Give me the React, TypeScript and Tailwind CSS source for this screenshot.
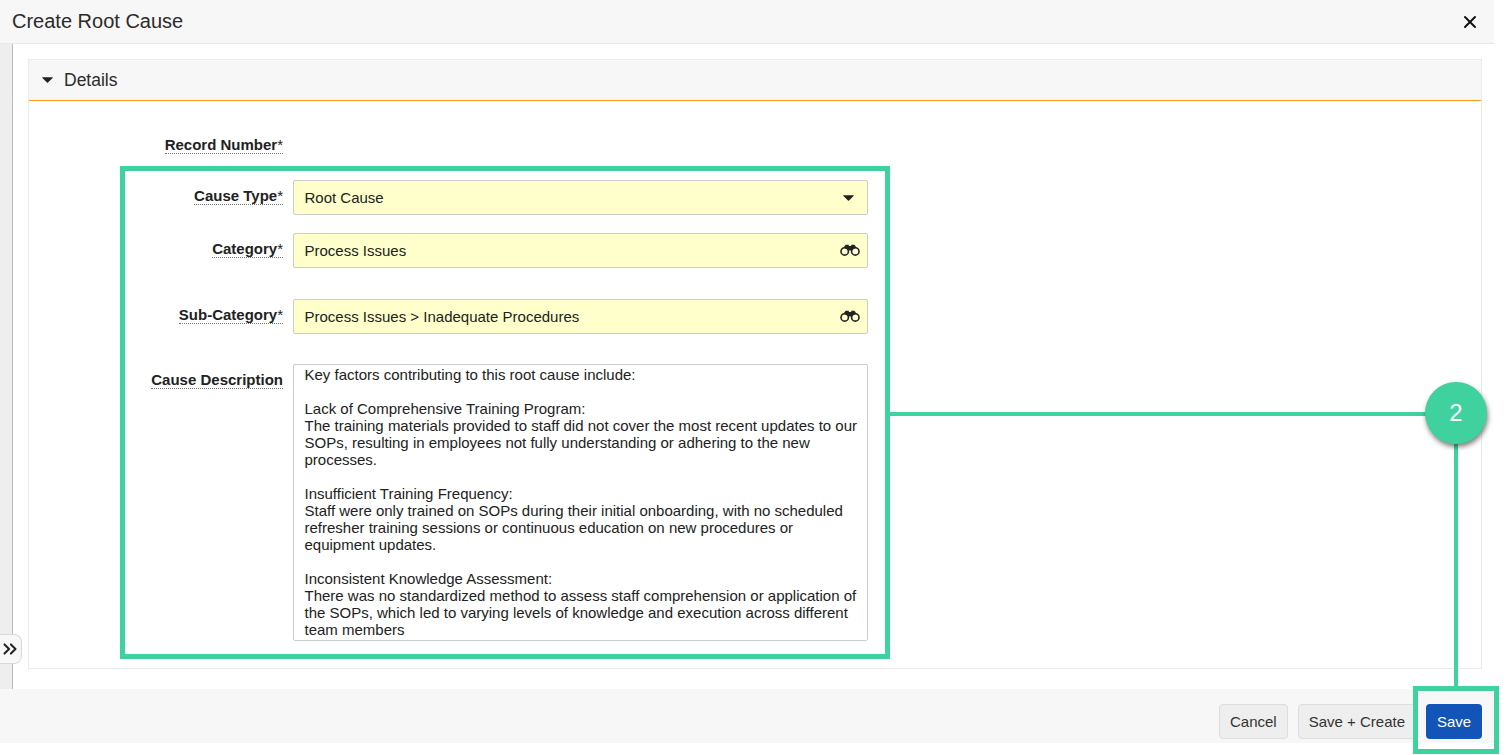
import React from 'react';
import { ChevronsRight, X } from 'lucide-react';

const font = 'font-["Liberation_Sans",Arial,sans-serif]';

function Caret({ className }: { className: string }) {
  return (
    <svg viewBox="0 0 11 6" className={className} fill="currentColor">
      <path d="M0.3 0.2 H10.7 Q11 0.6 10.6 1 L6 5.6 Q5.5 6 5 5.6 L0.4 1 Q0 0.6 0.3 0.2 Z" />
    </svg>
  );
}

function Binoculars() {
  return (
    <svg viewBox="0 0 20 12" className="-mt-[2px] -mr-[1px] h-3 w-5 text-[#222]" fill="none" stroke="currentColor">
      <circle cx="4.7" cy="7.4" r="3.7" strokeWidth="1.6" />
      <circle cx="15.3" cy="7.4" r="3.7" strokeWidth="1.6" />
      <path d="M3.6 3.6 L5.6 0.8 H8.8 V2 H11.2 V0.8 H14.4 L16.4 3.6 L11 6.4 H9 Z" fill="currentColor" stroke="none" />
    </svg>
  );
}

function Label({ text, star, className }: { text: string; star?: boolean; className?: string }) {
  return (
    <div className={`flex w-[283px] shrink-0 items-start justify-end ${className ?? ''}`}>
      <span className="border-b border-dotted border-[#777] text-[15px] leading-[17px] font-bold text-[#222]">
        {text}
        {star && <span className="font-normal">*</span>}
      </span>
    </div>
  );
}

function YellowField({ value, icon }: { value: string; icon: React.ReactNode }) {
  return (
    <div className="flex h-[35px] w-[575px] items-center justify-between rounded-[2px] border border-[#cccccc] bg-[#ffffcc] pr-2 pl-[10.5px] text-[15px] text-[#222]">
      <span className="pt-[2px]">{value}</span>
      {icon}
    </div>
  );
}

const description = `Key factors contributing to this root cause include:

Lack of Comprehensive Training Program:
The training materials provided to staff did not cover the most recent updates to our SOPs, resulting in employees not fully understanding or adhering to the new processes.

Insufficient Training Frequency:
Staff were only trained on SOPs during their initial onboarding, with no scheduled refresher training sessions or continuous education on new procedures or equipment updates.

Inconsistent Knowledge Assessment:
There was no standardized method to assess staff comprehension or application of the SOPs, which led to varying levels of knowledge and execution across different team members`;

export default function App() {
  return (
    <div className={`relative flex h-[755px] w-[1509px] flex-col overflow-hidden bg-white ${font}`}>
      <header className="flex h-11 w-[1494px] shrink-0 items-center justify-between border-b border-[#e8e8e8] bg-[#f7f7f7] pr-[14px] pl-3">
        <h1 className="-mt-[2px] text-[20px] text-[#2b2b2b]">Create Root Cause</h1>
        <X size={20} strokeWidth={2.4} className="text-[#111]" />
      </header>

      <div className="flex h-[645px] w-[1494px] shrink-0">
        <div className="w-[13px] shrink-0 border-r border-[#bbbbbb] bg-[#eeeeee]" />
        <main className="flex-1 pt-[15px] pr-3 pl-[15px]">
          <section className="h-[610px] border border-[#ebebeb]">
            <div className="flex h-[41px] items-center gap-[11px] border-b border-[#fb9a1e] bg-[#f7f7f7] pl-[13px]">
              <Caret className="h-[6px] w-[11px] text-[#222]" />
              <span className="text-[17.5px] text-[#2b2b2b]">Details</span>
            </div>

            <div className="relative pt-[35px]">
              <div className="flex -ml-[29px]">
                <Label text="Record Number" star />
              </div>
              <div className="-ml-[29px] mt-[26px] flex gap-[10px]">
                <Label text="Cause Type" star className="pt-[7px]" />
                <YellowField value="Root Cause" icon={<Caret className="mr-[5px] h-[6px] w-[11px] text-[#222]" />} />
              </div>
              <div className="-ml-[29px] mt-[18px] flex gap-[10px]">
                <Label text="Category" star className="pt-[7px]" />
                <YellowField value="Process Issues" icon={<Binoculars />} />
              </div>
              <div className="-ml-[29px] mt-[31px] flex gap-[10px]">
                <Label text="Sub-Category" star className="pt-[7px]" />
                <YellowField value="Process Issues > Inadequate Procedures" icon={<Binoculars />} />
              </div>
              <div className="-ml-[29px] mt-[30px] flex gap-[10px]">
                <Label text="Cause Description" className="pt-[7px]" />
                <div className="h-[277px] w-[575px] overflow-hidden rounded-[2px] border border-[#cccccc] bg-white pt-[1px] pr-2 pl-[10.5px] text-[15px] leading-[17px] whitespace-pre-line text-[#222]">
                  {description}
                </div>
              </div>
            </div>
          </section>
        </main>
      </div>

      <footer className="flex h-[54px] w-[1494px] shrink-0 items-start justify-end gap-[10px] bg-[#f7f7f7] pt-[15px] pr-3 text-[15px]">
        <button className="h-[35px] rounded border border-[#dddddd] bg-[#eeeeee] px-[10px] pt-[2px] text-[#333]">Cancel</button>
        <button className="h-[35px] rounded border border-[#dddddd] bg-[#eeeeee] px-[10px] pt-[2px] text-[#333]">Save + Create</button>
        <button className="h-[35px] w-[56px] rounded bg-[#1254b8] pt-[2px] text-white">Save</button>
      </footer>

      {/* sidebar toggle */}
      <button className="absolute top-[634px] left-0 flex h-[30px] w-[22px] items-center justify-start rounded-r-lg border border-l-0 border-[#d8d8d8] bg-[#f7f7f7]">
        <ChevronsRight size={22} strokeWidth={2.2} className="-ml-[1px] shrink-0 text-[#222]" />
      </button>

      {/* tutorial annotation overlay */}
      <div className="absolute top-[166px] left-[120px] h-[493px] w-[770px] border-[5px] border-[#3fd29f]" />
      <div className="absolute top-[412px] left-[890px] h-1 w-[536px] bg-[#3fd29f]" />
      <div className="absolute top-[444px] left-[1454px] h-[243px] w-1 bg-[#3fd29f]" />
      <div className="absolute top-[382px] left-[1425px] flex h-[62px] w-[62px] items-center justify-center rounded-full bg-[#3fd29f] text-[24px] text-white shadow-[1px_3px_5px_rgba(0,0,0,0.5)]">
        2
      </div>
      <div className="absolute top-[686px] left-[1413px] h-[68px] w-[86px] border-[5px] border-[#3fd29f]" />
    </div>
  );
}
